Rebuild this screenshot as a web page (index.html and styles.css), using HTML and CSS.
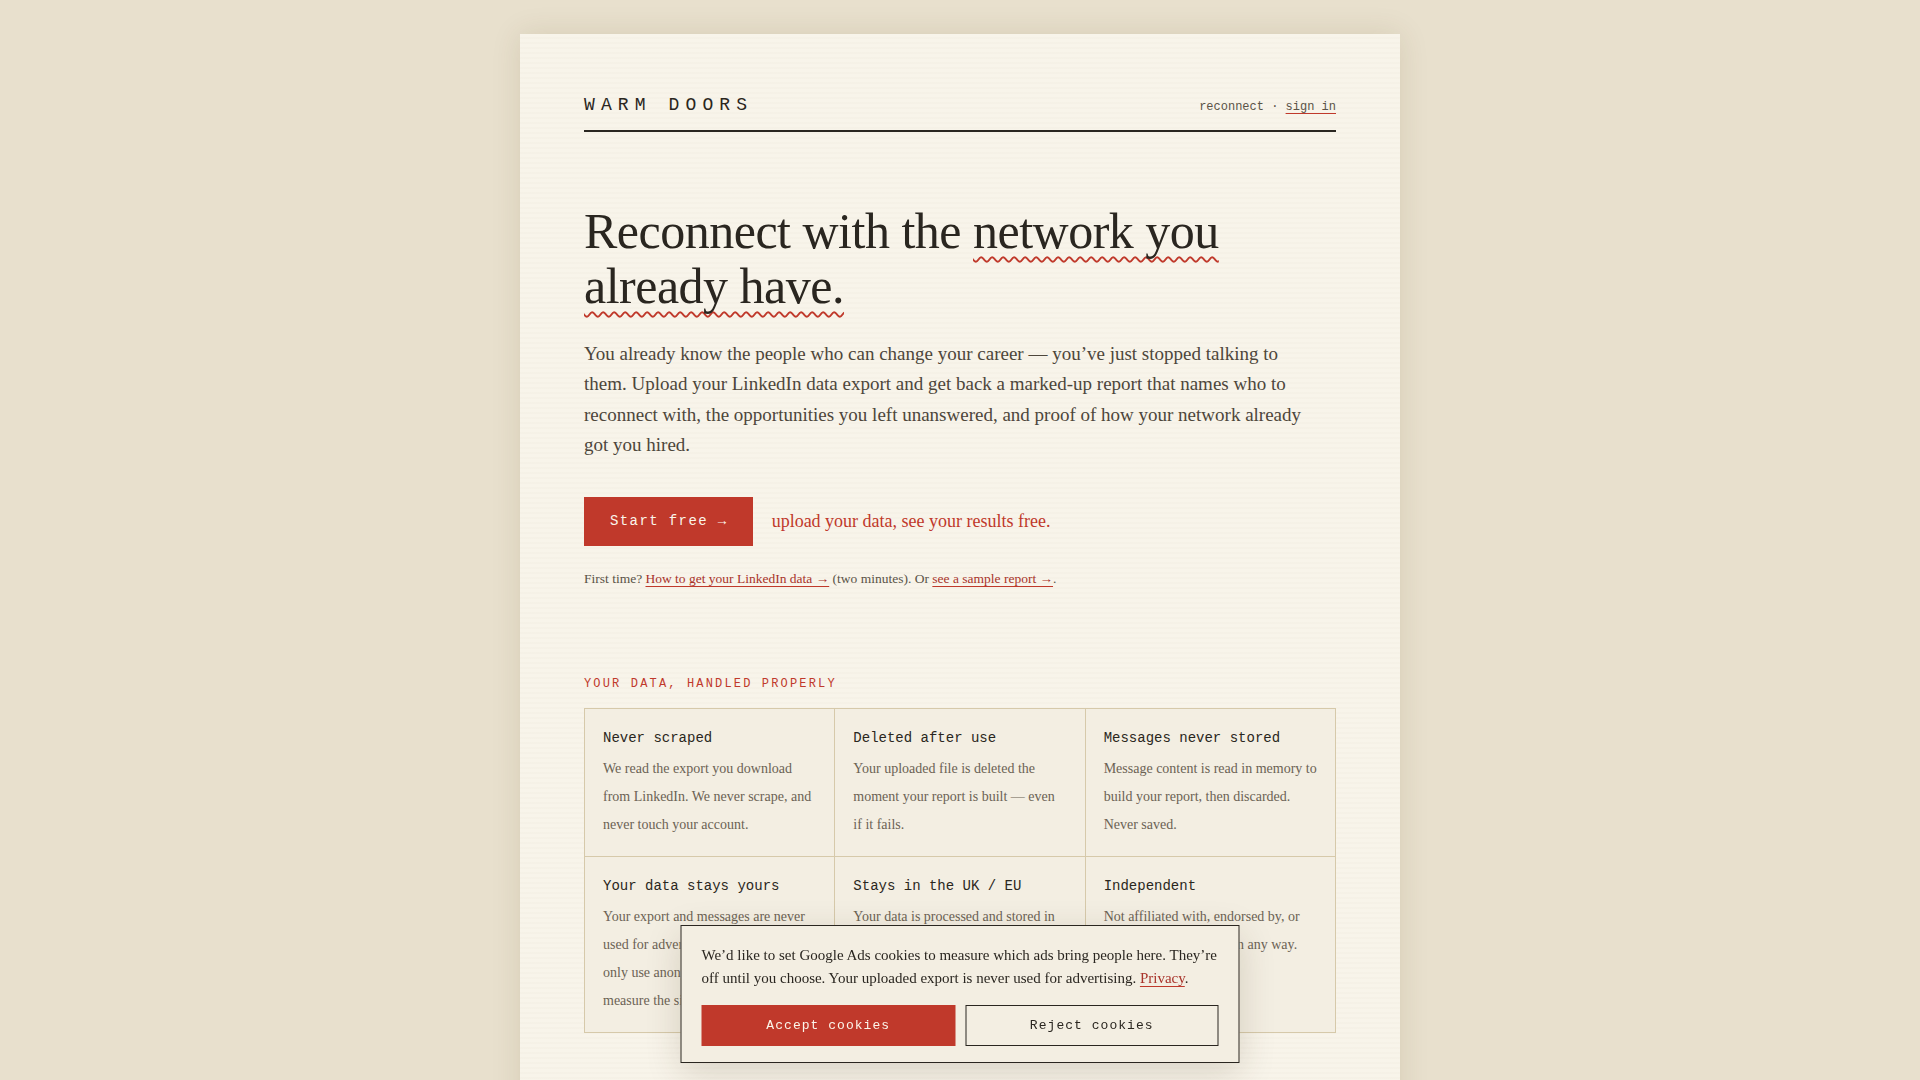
FILE: index.html
```html
<!DOCTYPE html>
<html lang="en">
<head>
  <meta charset="UTF-8">
  <meta name="viewport" content="width=device-width, initial-scale=1.0">
  <title>Warm Doors — reconnect with your network</title>
  <link rel="stylesheet" href="styles.css">
</head>
<body>
  <main class="sheet">
    <header class="masthead">
      <div class="wordmark">WARM DOORS</div>
      <nav class="masthead-nav">reconnect · <a href="#">sign in</a></nav>
    </header>

    <section class="hero">
      <h1 class="hero-title">Reconnect with the <span class="squiggle">network you already have.</span></h1>
      <p class="hero-lede">You already know the people who can change your career — you’ve just stopped talking to them. Upload your LinkedIn data export and get back a marked-up report that names who to reconnect with, the opportunities you left unanswered, and proof of how your network already got you hired.</p>

      <div class="cta-row">
        <a class="btn btn-primary btn-start" href="#">Start free →</a>
        <span class="cta-note">upload your data, see your results free.</span>
      </div>

      <p class="first-time">First time? <a href="#">How to get your LinkedIn data →</a> (two minutes). Or <a href="#">see a sample report →</a>.</p>
    </section>

    <section class="trust">
      <h2 class="eyebrow">YOUR DATA, HANDLED PROPERLY</h2>
      <div class="trust-grid">
        <div class="trust-cell">
          <h3>Never scraped</h3>
          <p>We read the export you download from LinkedIn. We never scrape, and never touch your account.</p>
        </div>
        <div class="trust-cell">
          <h3>Deleted after use</h3>
          <p>Your uploaded file is deleted the moment your report is built — even if it fails.</p>
        </div>
        <div class="trust-cell">
          <h3>Messages never stored</h3>
          <p>Message content is read in memory to build your report, then discarded. Never saved.</p>
        </div>
        <div class="trust-cell">
          <h3>Your data stays yours</h3>
          <p>Your export and messages are never used for advertising or training. We only use anonymous analytics to measure the site.</p>
        </div>
        <div class="trust-cell">
          <h3>Stays in the UK / EU</h3>
          <p>Your data is processed and stored in the UK and EU, and never leaves it.</p>
        </div>
        <div class="trust-cell">
          <h3>Independent</h3>
          <p>Not affiliated with, endorsed by, or connected to LinkedIn in any way.</p>
        </div>
      </div>
    </section>
  </main>

  <div class="cookie-banner">
    <p>We’d like to set Google Ads cookies to measure which ads bring people here. They’re off until you choose. Your uploaded export is never used for advertising. <a href="#">Privacy</a>.</p>
    <div class="cookie-actions">
      <button class="btn btn-primary">Accept cookies</button>
      <button class="btn btn-outline">Reject cookies</button>
    </div>
  </div>
</body>
</html>
```

FILE: styles.css
```css
/* Base */
body {
  margin: 0;
  background-color: #e8e0cd;
  color: #2a2620;
  font-family: "Liberation Serif", "Times New Roman", serif;
}

a {
  color: #a8332a;
  text-decoration: underline;
  text-decoration-color: #c0392b;
  text-underline-offset: 3px;
}

/* Paper sheet */
.sheet {
  width: 880px;
  min-height: 1100px;
  margin: 34px auto 0;
  padding: 61px 64px 80px;
  box-sizing: border-box;
  background-color: #f8f4ea;
  background-image: repeating-linear-gradient(0deg, rgba(120, 100, 60, 0.018) 0 2px, transparent 2px 5px);
  box-shadow: 0 0 28px rgba(80, 60, 20, 0.12);
}

/* Header */
.masthead {
  display: flex;
  justify-content: space-between;
  align-items: baseline;
  padding-bottom: 15px;
  border-bottom: 2px solid #2a2620;
}

.wordmark {
  font-family: "Liberation Mono", monospace;
  font-size: 18px;
  letter-spacing: 0.34em;
  color: #2a2620;
}

.masthead-nav {
  font-family: "Liberation Mono", monospace;
  font-size: 12px;
  color: #5a5347;
}

.masthead-nav a {
  color: #5a5347;
}

/* Hero */
.hero {
  padding-top: 72px;
}

.hero-title {
  margin: 0 0 24.5px;
  font-size: 50px;
  font-weight: normal;
  line-height: 1.1;
  letter-spacing: -0.01em;
  color: #2a2620;
}

.squiggle {
  text-decoration: underline wavy #c0392b;
  text-decoration-thickness: 1.5px;
  text-underline-offset: 8px;
  text-decoration-skip-ink: none;
}

.hero-lede {
  max-width: 720px;
  margin: 0;
  font-size: 19px;
  line-height: 1.61;
  color: #4d463b;
}

.cta-row {
  display: flex;
  align-items: center;
  gap: 19px;
  margin-top: 36px;
}

.btn {
  display: inline-block;
  font-family: "Liberation Mono", monospace;
  font-size: 14px;
  letter-spacing: 0.1em;
  line-height: 21px;
  text-decoration: none;
  border: none;
  border-radius: 0;
  cursor: pointer;
}

.btn-primary {
  background-color: #c0392b;
  color: #fbf5ea;
}

.btn-primary:hover {
  background-color: #a93226;
}

.btn-start {
  padding: 14px 25px 14px 26px;
}

.cta-note {
  font-size: 18px;
  color: #c0392b;
}

.first-time {
  margin: 22px 0 0;
  font-size: 13.5px;
  line-height: 21px;
  color: #5a5347;
}

/* Trust grid */
.trust {
  margin-top: 88px;
}

.eyebrow {
  margin: 0 0 17px;
  font-family: "Liberation Mono", monospace;
  font-size: 12px;
  font-weight: normal;
  letter-spacing: 0.18em;
  color: #c0392b;
}

.trust-grid {
  display: grid;
  grid-template-columns: repeat(3, 1fr);
  border-top: 1px solid #d6c9aa;
  border-left: 1px solid #d6c9aa;
  background-color: #f3eee2;
}

.trust-cell {
  padding: 21px 18px 17px;
  border-right: 1px solid #d6c9aa;
  border-bottom: 1px solid #d6c9aa;
}

.trust-cell h3 {
  margin: 0 0 9px;
  font-family: "Liberation Mono", monospace;
  font-size: 14px;
  font-weight: normal;
  line-height: 16px;
  color: #2a2620;
}

.trust-cell p {
  margin: 0;
  font-size: 14px;
  line-height: 28px;
  color: #6b6254;
}

/* Cookie banner */
.cookie-banner {
  position: fixed;
  left: 50%;
  bottom: 17px;
  width: 559px;
  box-sizing: border-box;
  transform: translateX(-50%);
  padding: 18px 20px 16px;
  background-color: #f3eee2;
  border: 1px solid #2a2620;
  box-shadow: 0 10px 34px rgba(60, 45, 15, 0.16);
}

.cookie-banner p {
  margin: 0;
  font-size: 15px;
  line-height: 23px;
  color: #2a2620;
}

.cookie-actions {
  display: grid;
  grid-template-columns: 1fr 1fr;
  gap: 10px;
  margin-top: 15px;
}

.cookie-actions .btn {
  padding: 9px 0;
  font-size: 13px;
  letter-spacing: 0.08em;
  text-align: center;
}

.btn-outline {
  background: transparent;
  color: #2a2620;
  border: 1px solid #2a2620;
}
```
